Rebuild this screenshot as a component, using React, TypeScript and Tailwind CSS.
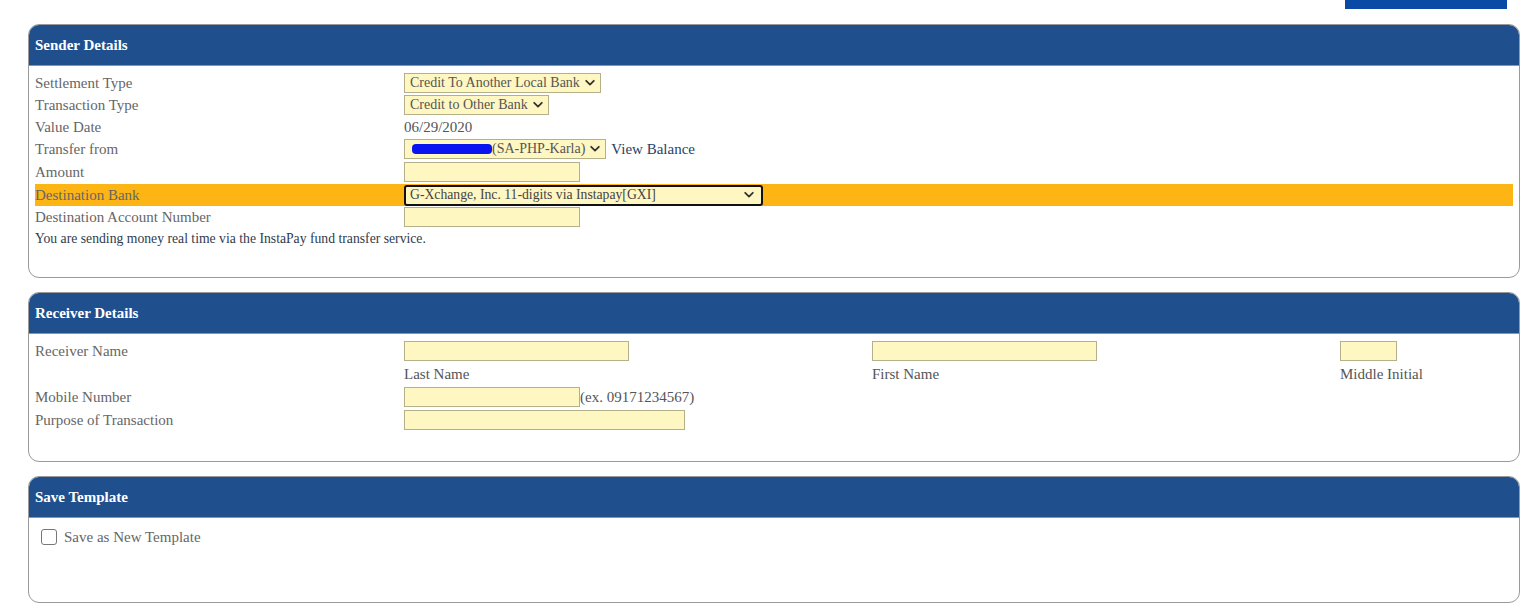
import React from "react";

const serif = { fontFamily: '"Liberation Serif", "Times New Roman", serif' };

function Chevron() {
  return (
    <svg width="10" height="8" viewBox="0 0 10 8" className="shrink-0">
      <path d="M1.2 1.8 L5 5.6 L8.8 1.8" fill="none" stroke="#333" strokeWidth="1.8" strokeLinecap="round" strokeLinejoin="round" />
    </svg>
  );
}

function Select({ children, className = "" }: { children: React.ReactNode; className?: string }) {
  return (
    <div className={`inline-flex items-center h-[20px] border border-[#b3b08a] bg-[#fff7c2] pl-[5px] pr-[5px] gap-[5px] text-[14px] text-[#555] leading-none ${className}`}>
      {children}
    </div>
  );
}

function Input({ w }: { w: string }) {
  return <div className={`h-[20px] border border-[#b3b08a] bg-[#fff7c2] ${w}`} />;
}

function Panel({ title, children, bodyClass }: { title: string; children: React.ReactNode; bodyClass: string }) {
  return (
    <div className="border border-[#9a9a9a] rounded-[11px] overflow-hidden bg-white">
      <div className="h-[40px] bg-[#1f4f8c] flex items-center pl-[6px] text-white font-bold text-[15px]">{title}</div>
      <div className={`border-t border-[#7f98b8] px-[6px] ${bodyClass}`}>{children}</div>
    </div>
  );
}

function Row({ label, children, className = "" }: { label: string; children?: React.ReactNode; className?: string }) {
  return (
    <div className={`grid grid-cols-[369px_1fr] items-center ${className}`}>
      <div className="text-[15px] text-[#666] leading-none">{label}</div>
      <div className="flex items-center">{children}</div>
    </div>
  );
}

export default function App() {
  return (
    <div className="w-[1540px] h-[616px] bg-white overflow-hidden" style={serif}>
      <div className="h-[24px] flex justify-end pr-[33px]">
        <div className="w-[162px] h-[9px] bg-[#0a4aa6]" />
      </div>
      <div className="pl-[28px] pr-[20px] flex flex-col gap-[14px]">
        <Panel title="Sender Details" bodyClass="pt-[6px] pb-[27px]">
          <Row label="Settlement Type" className="h-[22px]">
            <Select>Credit To Another Local Bank<Chevron /></Select>
          </Row>
          <Row label="Transaction Type" className="h-[22px]">
            <Select>Credit to Other Bank<Chevron /></Select>
          </Row>
          <Row label="Value Date" className="h-[22px]">
            <span className="text-[15px] text-[#555] leading-none">06/29/2020</span>
          </Row>
          <Row label="Transfer from" className="h-[22px]">
            <Select className="pl-[7px]">
              <span className="flex items-center">
                <span className="inline-block w-[80px] h-[10px] rounded-[4px] bg-[#0a14f0]" />
                <span>(SA-PHP-Karla)</span>
              </span>
              <Chevron />
            </Select>
            <span className="ml-[5px] text-[15px] text-[#2b3f66] leading-none">View Balance</span>
          </Row>
          <Row label="Amount" className="h-[24px]">
            <Input w="w-[176px]" />
          </Row>
          <Row label="Destination Bank" className="h-[22px] bg-[#fdb515]">
            <div className="flex items-center justify-between w-[359px] h-[21px] border-2 border-[#111] rounded-[3px] bg-[#fff7c2] pl-[4px] pr-[7px] text-[13.7px] text-[#444] leading-none">
              <span>G-Xchange, Inc. 11-digits via Instapay[GXI]</span>
              <Chevron />
            </div>
          </Row>
          <Row label="Destination Account Number" className="h-[22px]">
            <Input w="w-[176px]" />
          </Row>
          <div className="h-[22px] flex items-center text-[13.7px] text-[#2f3a4c] leading-none">
            You are sending money real time via the InstaPay fund transfer service.
          </div>
        </Panel>

        <Panel title="Receiver Details" bodyClass="pt-[7px] pb-[31px]">
          <div className="grid grid-cols-[369px_468px_468px_1fr] items-center">
            <div className="h-[20px] flex items-center text-[15px] text-[#666] leading-none">Receiver Name</div>
            <Input w="w-[225px]" />
            <Input w="w-[225px]" />
            <Input w="w-[57px]" />
            <div className="h-[26px]" />
            <div className="h-[26px] flex items-center text-[15px] text-[#555] leading-none">Last Name</div>
            <div className="h-[26px] flex items-center text-[15px] text-[#555] leading-none">First Name</div>
            <div className="h-[26px] flex items-center text-[15px] text-[#555] leading-none">Middle Initial</div>
          </div>
          <Row label="Mobile Number" className="h-[20px]">
            <Input w="w-[176px]" />
            <span className="text-[15px] text-[#555] leading-none">(ex. 09171234567)</span>
          </Row>
          <Row label="Purpose of Transaction" className="h-[23px] pt-[3px]">
            <Input w="w-[281px]" />
          </Row>
        </Panel>

        <Panel title="Save Template" bodyClass="pt-[11px] pb-[57px]">
          <div className="flex items-center h-[16px]">
            <div className="ml-[6px] w-[16px] h-[16px] border border-[#777] rounded-[3px] bg-white" />
            <span className="ml-[7px] text-[15px] text-[#666] leading-none">Save as New Template</span>
          </div>
        </Panel>
      </div>
    </div>
  );
}
